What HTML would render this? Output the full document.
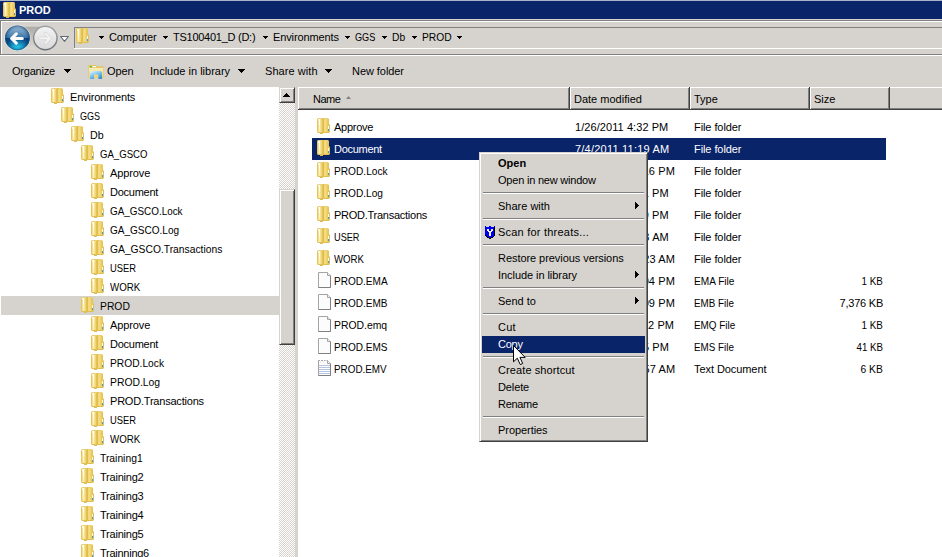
<!DOCTYPE html><html><head><meta charset="utf-8"><style>*{margin:0;padding:0;box-sizing:border-box}
html,body{width:942px;height:557px;overflow:hidden;background:#d6d3ce;font-family:"Liberation Sans",sans-serif;font-size:11px;color:#000;position:relative}
.ic{position:absolute;width:16px;height:16px;overflow:visible}
#title{position:absolute;left:0;top:0;width:942px;height:19px;background:#0a246a;border-top:1px solid #a6b2cc}

.tt{position:absolute;left:19px;top:3px;line-height:13px;color:#fff;font-weight:bold;font-size:11px}
.abs{position:absolute}
.t12{position:absolute;white-space:nowrap;line-height:14px}
#tree{position:absolute;left:0;top:87px;width:279px;height:470px;background:#fff;overflow:hidden}
.trow{position:absolute;left:1px;width:278px;height:19px}
.trow.sel{background:#d6d3ce}
.trow .ic{}
.tl{position:absolute;top:4px;line-height:13px;white-space:nowrap}
#list{position:absolute;left:298px;top:116px;width:644px;height:441px}
#listbg{position:absolute;left:298px;top:110px;width:644px;height:447px;background:#fff}
.lrow{position:absolute;left:0;width:644px;height:22px}
.lrow .selbg{display:none}
.lrow.sel .selbg{display:block;position:absolute;left:14px;top:0;width:574px;height:22px;background:#0a246a}
.lrow.sel span{color:#fff}
.lrow span{position:absolute;top:5px;line-height:13px;white-space:nowrap}
.c1{left:36px}
.c2{left:277px}
.c3{left:396px}
.c4{right:59px;text-align:right}
#menu{position:absolute;left:479px;top:152px;width:169px;height:290px;background:#d6d3ce;border-top:1px solid #d6d3ce;border-left:1px solid #d6d3ce;border-right:1px solid #404040;border-bottom:1px solid #404040;box-shadow:inset 1px 1px 0 #fff,inset -1px -1px 0 #808080}
.mi{position:absolute;left:2px;width:163px;height:17px}
.mt{position:absolute;left:16px;top:2px;line-height:13px;white-space:nowrap}
.mb .mt{font-weight:bold}
.mh{background:#0a246a;color:#fff}
.msep{position:absolute;left:3px;width:161px;height:2px;margin-top:3px;border-top:1px solid #808080;border-bottom:1px solid #fff}
.marr{position:absolute;right:7px;top:4px;width:0;height:0;border-top:4px solid transparent;border-bottom:4px solid transparent;border-left:4px solid #000}
.shield{position:absolute;left:3px;top:2px;width:10px;height:13px}
#cursor{position:absolute;left:513px;top:345px}
.tri5{width:0;height:0;border-left:3px solid transparent;border-right:3px solid transparent;border-top:3px solid #000}
.tri7{width:0;height:0;border-left:4px solid transparent;border-right:4px solid transparent;border-top:4px solid #000}
.btn3d{background:#d6d3ce;border-right:1px solid #404040;border-bottom:1px solid #404040;box-shadow:inset 1px 1px 0 #fff,inset -1px -1px 0 #808080;border-top:1px solid #d6d3ce;border-left:1px solid #d6d3ce}
.hd{position:absolute;top:87px;height:23px;background:#d6d3ce;border-right:1px solid #404040;border-bottom:1px solid #404040;box-shadow:inset 1px 1px 0 #fff,inset -1px -1px 0 #808080}
.hd span{position:absolute;top:6px;line-height:13px;white-space:nowrap}
</style></head><body>
<svg width="0" height="0" style="position:absolute">
<defs>
<linearGradient id="fg1" x1="0" y1="0" x2="1" y2="0"><stop offset="0" stop-color="#e6c85a"/><stop offset="0.35" stop-color="#fbf0b8"/><stop offset="1" stop-color="#e9cf6a"/></linearGradient>
<linearGradient id="fg2" x1="0" y1="0" x2="1" y2="0"><stop offset="0" stop-color="#d9b94a"/><stop offset="0.5" stop-color="#f2df8e"/><stop offset="1" stop-color="#e2c660"/></linearGradient>
<g id="fold" shape-rendering="crispEdges"><rect x="1" y="1" width="1" height="1" fill="#ead07a" opacity="0.45"/><rect x="1" y="2" width="1" height="13" fill="#e6c656"/><rect x="1" y="15" width="1" height="1" fill="#e0c056" opacity="0.45"/><rect x="2" y="1" width="1" height="1" fill="#ead07a"/><rect x="2" y="2" width="1" height="2" fill="#fff6d0"/><rect x="2" y="4" width="1" height="11" fill="#f6e08a"/><rect x="2" y="15" width="1" height="1" fill="#e0c056"/><rect x="3" y="1" width="1" height="1" fill="#ead07a"/><rect x="3" y="2" width="1" height="6" fill="#ffffff"/><rect x="3" y="8" width="1" height="4" fill="#fcf2cc"/><rect x="3" y="12" width="1" height="3" fill="#fbecb0"/><rect x="3" y="15" width="1" height="1" fill="#e0c056"/><rect x="4" y="1" width="1" height="1" fill="#ead07a"/><rect x="4" y="2" width="1" height="13" fill="#f6e296"/><rect x="4" y="15" width="1" height="1" fill="#e0c056"/><rect x="4" y="16" width="1" height="1" fill="#dfbf52"/><rect x="5" y="1" width="1" height="1" fill="#ead07a"/><rect x="5" y="2" width="1" height="13" fill="#f0d678"/><rect x="5" y="15" width="1" height="1" fill="#e0c056"/><rect x="5" y="16" width="1" height="1" fill="#dfbf52"/><rect x="6" y="1" width="1" height="1" fill="#ead07a"/><rect x="6" y="2" width="1" height="13" fill="#e4c256"/><rect x="6" y="15" width="1" height="1" fill="#e0c056"/><rect x="6" y="16" width="1" height="1" fill="#dfbf52"/><rect x="7" y="1" width="1" height="14" fill="#dfbd4c"/><rect x="7" y="15" width="1" height="1" fill="#dfbf52"/><rect x="8" y="1" width="1" height="1" fill="#eed27a"/><rect x="8" y="2" width="1" height="13" fill="#f2d878"/><rect x="8" y="15" width="1" height="1" fill="#dfbf52"/><rect x="9" y="1" width="1" height="1" fill="#eed27a"/><rect x="9" y="2" width="1" height="13" fill="#f4dc82"/><rect x="9" y="15" width="1" height="1" fill="#dfbf52"/><rect x="10" y="1" width="1" height="1" fill="#eed27a"/><rect x="10" y="2" width="1" height="13" fill="#f0d472"/><rect x="10" y="15" width="1" height="1" fill="#dfbf52"/><rect x="11" y="1" width="1" height="1" fill="#eed27a"/><rect x="11" y="2" width="1" height="13" fill="#eacb62"/><rect x="11" y="15" width="1" height="1" fill="#dfbf52"/><rect x="12" y="1" width="1" height="1" fill="#eed27a" opacity="0.45"/><rect x="12" y="2" width="1" height="7" fill="#e4c456"/><rect x="12" y="9" width="1" height="3" fill="#f8fbff"/><rect x="12" y="12" width="1" height="2" fill="#3a9ae4"/><rect x="12" y="14" width="1" height="1" fill="#e4c456"/><rect x="12" y="15" width="1" height="1" fill="#dfbf52"/><rect x="13" y="7" width="1" height="1" fill="#e0bf50" opacity="0.45"/><rect x="13" y="8" width="1" height="7" fill="#e0bf50"/><rect x="13" y="15" width="1" height="1" fill="#e0bf50" opacity="0.45"/></g>
<g id="doc">
 <path d="M2.5 1.5 H11.5 L14.5 4.5 V16.5 H2.5 Z" fill="#fdfcfd" stroke="#a4a4a4"/>
 <path d="M2.5 16.5 H14.5 V4.5" fill="none" stroke="#808080"/>
 <path d="M11.5 1.5 V4.5 H14.5" fill="#f2f2f2" stroke="#a4a4a4"/>
</g>
<g id="txt">
 <path d="M2.5 1.5 H11.5 L14.5 4.5 V16.5 H2.5 Z" fill="#fdfcfd" stroke="#a4a4a4"/>
 <path d="M2.5 16.5 H14.5 V4.5" fill="none" stroke="#808080"/>
 <path d="M11.5 1.5 V4.5 H14.5" fill="#f2f2f2" stroke="#a4a4a4"/>
 <path d="M4 1.5 H5 M7 1.5 H8 M9.5 1.5 H10.5" stroke="#fff" stroke-width="1.2"/>
 <path d="M4.5 3 H5 M7.5 3 H8" stroke="#b8c4d8"/>
 <path d="M3 6.5 H14 M3 8.5 H14 M3 10.5 H14 M3 12.5 H14 M3 14.5 H14" stroke="#b6c6e2"/>
</g>
<g id="shield" shape-rendering="crispEdges"><rect x="0" y="0" width="1" height="1" fill="#0000f0"/><rect x="4" y="0" width="1" height="1" fill="#0000f0"/><rect x="5" y="0" width="1" height="1" fill="#0000f0"/><rect x="9" y="0" width="1" height="1" fill="#0000f0"/><rect x="0" y="1" width="1" height="1" fill="#0000f0"/><rect x="1" y="1" width="1" height="1" fill="#0000f0"/><rect x="2" y="1" width="1" height="1" fill="#0000f0"/><rect x="3" y="1" width="1" height="1" fill="#0000f0"/><rect x="4" y="1" width="1" height="1" fill="#0000f0"/><rect x="5" y="1" width="1" height="1" fill="#0000f0"/><rect x="6" y="1" width="1" height="1" fill="#0000f0"/><rect x="7" y="1" width="1" height="1" fill="#0000f0"/><rect x="8" y="1" width="1" height="1" fill="#0000f0"/><rect x="9" y="1" width="1" height="1" fill="#000000"/><rect x="0" y="2" width="1" height="1" fill="#0000f0"/><rect x="1" y="2" width="1" height="1" fill="#0000f0"/><rect x="2" y="2" width="1" height="1" fill="#0000f0"/><rect x="3" y="2" width="1" height="1" fill="#0000f0"/><rect x="4" y="2" width="1" height="1" fill="#0000f0"/><rect x="5" y="2" width="1" height="1" fill="#0000f0"/><rect x="6" y="2" width="1" height="1" fill="#0000f0"/><rect x="7" y="2" width="1" height="1" fill="#0000f0"/><rect x="8" y="2" width="1" height="1" fill="#0000f0"/><rect x="9" y="2" width="1" height="1" fill="#000000"/><rect x="0" y="3" width="1" height="1" fill="#0000f0"/><rect x="1" y="3" width="1" height="1" fill="#0000f0"/><rect x="2" y="3" width="1" height="1" fill="#f4f4e0"/><rect x="3" y="3" width="1" height="1" fill="#f4f4e0"/><rect x="4" y="3" width="1" height="1" fill="#0000f0"/><rect x="5" y="3" width="1" height="1" fill="#0000f0"/><rect x="6" y="3" width="1" height="1" fill="#f4f4e0"/><rect x="7" y="3" width="1" height="1" fill="#f4f4e0"/><rect x="8" y="3" width="1" height="1" fill="#0000f0"/><rect x="9" y="3" width="1" height="1" fill="#000000"/><rect x="0" y="4" width="1" height="1" fill="#0000f0"/><rect x="1" y="4" width="1" height="1" fill="#0000f0"/><rect x="2" y="4" width="1" height="1" fill="#f4f4e0"/><rect x="3" y="4" width="1" height="1" fill="#f4f4e0"/><rect x="4" y="4" width="1" height="1" fill="#0000f0"/><rect x="5" y="4" width="1" height="1" fill="#0000f0"/><rect x="6" y="4" width="1" height="1" fill="#f4f4e0"/><rect x="7" y="4" width="1" height="1" fill="#f4f4e0"/><rect x="8" y="4" width="1" height="1" fill="#0000f0"/><rect x="9" y="4" width="1" height="1" fill="#000000"/><rect x="0" y="5" width="1" height="1" fill="#0000f0"/><rect x="1" y="5" width="1" height="1" fill="#0000f0"/><rect x="2" y="5" width="1" height="1" fill="#0000f0"/><rect x="3" y="5" width="1" height="1" fill="#f4f4e0"/><rect x="4" y="5" width="1" height="1" fill="#f4f4e0"/><rect x="5" y="5" width="1" height="1" fill="#f4f4e0"/><rect x="6" y="5" width="1" height="1" fill="#f4f4e0"/><rect x="7" y="5" width="1" height="1" fill="#0000f0"/><rect x="8" y="5" width="1" height="1" fill="#0000f0"/><rect x="9" y="5" width="1" height="1" fill="#000000"/><rect x="0" y="6" width="1" height="1" fill="#0000f0"/><rect x="1" y="6" width="1" height="1" fill="#0000f0"/><rect x="2" y="6" width="1" height="1" fill="#0000f0"/><rect x="3" y="6" width="1" height="1" fill="#0000f0"/><rect x="4" y="6" width="1" height="1" fill="#f4f4e0"/><rect x="5" y="6" width="1" height="1" fill="#f4f4e0"/><rect x="6" y="6" width="1" height="1" fill="#0000f0"/><rect x="7" y="6" width="1" height="1" fill="#0000f0"/><rect x="8" y="6" width="1" height="1" fill="#0000f0"/><rect x="9" y="6" width="1" height="1" fill="#000000"/><rect x="0" y="7" width="1" height="1" fill="#0000f0"/><rect x="1" y="7" width="1" height="1" fill="#0000f0"/><rect x="2" y="7" width="1" height="1" fill="#0000f0"/><rect x="3" y="7" width="1" height="1" fill="#0000f0"/><rect x="4" y="7" width="1" height="1" fill="#f4f4e0"/><rect x="5" y="7" width="1" height="1" fill="#f4f4e0"/><rect x="6" y="7" width="1" height="1" fill="#0000f0"/><rect x="7" y="7" width="1" height="1" fill="#0000f0"/><rect x="8" y="7" width="1" height="1" fill="#0000f0"/><rect x="9" y="7" width="1" height="1" fill="#000000"/><rect x="0" y="8" width="1" height="1" fill="#0000f0"/><rect x="1" y="8" width="1" height="1" fill="#0000f0"/><rect x="2" y="8" width="1" height="1" fill="#0000f0"/><rect x="3" y="8" width="1" height="1" fill="#0000f0"/><rect x="4" y="8" width="1" height="1" fill="#f4f4e0"/><rect x="5" y="8" width="1" height="1" fill="#f4f4e0"/><rect x="6" y="8" width="1" height="1" fill="#0000f0"/><rect x="7" y="8" width="1" height="1" fill="#0000f0"/><rect x="8" y="8" width="1" height="1" fill="#0000f0"/><rect x="9" y="8" width="1" height="1" fill="#000000"/><rect x="0" y="9" width="1" height="1" fill="#000000"/><rect x="1" y="9" width="1" height="1" fill="#0000f0"/><rect x="2" y="9" width="1" height="1" fill="#0000f0"/><rect x="3" y="9" width="1" height="1" fill="#0000f0"/><rect x="4" y="9" width="1" height="1" fill="#f4f4e0"/><rect x="5" y="9" width="1" height="1" fill="#f4f4e0"/><rect x="6" y="9" width="1" height="1" fill="#0000f0"/><rect x="7" y="9" width="1" height="1" fill="#0000f0"/><rect x="8" y="9" width="1" height="1" fill="#0000f0"/><rect x="9" y="9" width="1" height="1" fill="#000000"/><rect x="1" y="10" width="1" height="1" fill="#000000"/><rect x="2" y="10" width="1" height="1" fill="#0000f0"/><rect x="3" y="10" width="1" height="1" fill="#0000f0"/><rect x="4" y="10" width="1" height="1" fill="#0000f0"/><rect x="5" y="10" width="1" height="1" fill="#0000f0"/><rect x="6" y="10" width="1" height="1" fill="#0000f0"/><rect x="7" y="10" width="1" height="1" fill="#0000f0"/><rect x="8" y="10" width="1" height="1" fill="#000000"/><rect x="2" y="11" width="1" height="1" fill="#000000"/><rect x="3" y="11" width="1" height="1" fill="#000000"/><rect x="4" y="11" width="1" height="1" fill="#0000f0"/><rect x="5" y="11" width="1" height="1" fill="#0000f0"/><rect x="6" y="11" width="1" height="1" fill="#000000"/><rect x="7" y="11" width="1" height="1" fill="#000000"/><rect x="4" y="12" width="1" height="1" fill="#000000"/><rect x="5" y="12" width="1" height="1" fill="#000000"/></g>
<g id="cur"><path d="M0.5 0.5 V16.8 L4.3 13.2 L7.3 19.6 L9.7 18.5 L6.9 12.4 H12.2 Z" fill="#fff" stroke="#000" stroke-linejoin="miter"/></g>
</defs>
</svg>

<div id="title"><svg class="ic" style="left:2px;top:0px"><use href="#fold"/></svg><span class="tt">PROD</span></div>
<div class="abs" style="left:0;top:20px;width:942px;height:1px;background:#808080"></div>
<div class="abs" style="left:0;top:21px;width:942px;height:1px;background:#fff"></div>
<div class="abs" style="left:0;top:20px;width:1px;height:35px;background:#808080"></div>
<div class="abs" style="left:1px;top:21px;width:1px;height:34px;background:#fff"></div>
<div class="abs" style="left:0;top:54px;width:942px;height:1px;background:#808080"></div>
<div class="abs" style="left:0;top:55px;width:942px;height:1px;background:#fff"></div>
<svg class="abs" style="left:0;top:22px" width="72" height="32">
 <defs>
  <linearGradient id="bb" x1="0" y1="0" x2="0" y2="1"><stop offset="0" stop-color="#cfe0ec"/><stop offset="0.1" stop-color="#8db2d2"/><stop offset="0.49" stop-color="#3a76a8"/><stop offset="0.51" stop-color="#08427e"/><stop offset="0.78" stop-color="#0a5c9e"/><stop offset="1" stop-color="#16b4e4"/></linearGradient><radialGradient id="bedge" cx="0.5" cy="0.5" r="0.5"><stop offset="0.7" stop-color="#062850" stop-opacity="0"/><stop offset="1" stop-color="#062850" stop-opacity="0.45"/></radialGradient>
  <radialGradient id="bglow" cx="0.5" cy="1" r="0.5"><stop offset="0" stop-color="#30e8ff" stop-opacity="0.9"/><stop offset="1" stop-color="#30e8ff" stop-opacity="0"/></radialGradient>
  <linearGradient id="fb" x1="0" y1="0" x2="0" y2="1"><stop offset="0" stop-color="#f4f4f4"/><stop offset="0.5" stop-color="#e6e6e6"/><stop offset="1" stop-color="#dadada"/></linearGradient>
  <linearGradient id="pill" x1="0" y1="0" x2="0" y2="1"><stop offset="0" stop-color="#aeaca6"/><stop offset="0.6" stop-color="#cac7c0"/><stop offset="1" stop-color="#dcd9d2"/></linearGradient>
  <linearGradient id="ring" x1="0" y1="0" x2="0" y2="1"><stop offset="0" stop-color="#9ea3a8"/><stop offset="1" stop-color="#6a7078"/></linearGradient>
 </defs>
 <path d="M17 4.8 H45 A11.2 11.2 0 0 1 45 27.2 H17 A11.2 11.2 0 0 1 17 4.8 Z" fill="url(#pill)"/>
 <circle cx="17.4" cy="15.8" r="13.2" fill="#e8e8e4" opacity="0.7"/>
 <circle cx="17.4" cy="15.8" r="12.4" fill="url(#bb)"/>
 <circle cx="17.4" cy="15.8" r="12.4" fill="url(#bglow)"/><circle cx="17.4" cy="15.8" r="12.4" fill="url(#bedge)"/>
 <circle cx="17.4" cy="15.8" r="12.0" fill="none" stroke="#1a5a98" stroke-width="0.8" opacity="0.6"/>
 <path d="M16.3 11.8 L11.6 16.5 L16.3 21.2 M12.2 16.5 H22.3" fill="none" stroke="#fafafa" stroke-width="3.1" stroke-linecap="round" stroke-linejoin="round"/>
 <circle cx="45.35" cy="16" r="11.7" fill="url(#fb)" stroke="url(#ring)" stroke-width="1.4"/>
 <path d="M45.5 11.6 L50.2 16.3 L45.5 21 M39.8 16.3 H49.5" fill="none" stroke="#cfcfcf" stroke-width="3.3" stroke-linecap="round" stroke-linejoin="round"/>
 <path d="M45.5 11.6 L50.2 16.3 L45.5 21 M39.8 16.3 H49.5" fill="none" stroke="#f2f2f2" stroke-width="2.2" stroke-linecap="round" stroke-linejoin="round"/>
 <path d="M60.6 14.5 H68.4 L64.5 19.3 Z" fill="#fff" stroke="#5f6a74" stroke-width="1.1" stroke-linejoin="round"/>
</svg>
<div class="abs" style="left:74px;top:27px;width:868px;height:1px;background:#808080"></div>
<div class="abs" style="left:74px;top:27px;width:1px;height:21px;background:#808080"></div>
<div class="abs" style="left:74px;top:48px;width:868px;height:1px;background:#fff"></div>
<svg class="ic" style="left:75px;top:27px"><use href="#fold"/></svg>

<svg class="abs" style="left:99px;top:36px" width="5" height="3" shape-rendering="crispEdges"><path d="M0 0H5V1H4V2H3V3H2V2H1V1H0Z"/></svg>
<svg class="abs" style="left:163px;top:36px" width="5" height="3" shape-rendering="crispEdges"><path d="M0 0H5V1H4V2H3V3H2V2H1V1H0Z"/></svg>
<svg class="abs" style="left:263px;top:36px" width="5" height="3" shape-rendering="crispEdges"><path d="M0 0H5V1H4V2H3V3H2V2H1V1H0Z"/></svg>
<svg class="abs" style="left:345px;top:36px" width="5" height="3" shape-rendering="crispEdges"><path d="M0 0H5V1H4V2H3V3H2V2H1V1H0Z"/></svg>
<svg class="abs" style="left:382px;top:36px" width="5" height="3" shape-rendering="crispEdges"><path d="M0 0H5V1H4V2H3V3H2V2H1V1H0Z"/></svg>
<svg class="abs" style="left:412px;top:36px" width="5" height="3" shape-rendering="crispEdges"><path d="M0 0H5V1H4V2H3V3H2V2H1V1H0Z"/></svg>
<svg class="abs" style="left:457px;top:36px" width="5" height="3" shape-rendering="crispEdges"><path d="M0 0H5V1H4V2H3V3H2V2H1V1H0Z"/></svg>
<span class="t12" style="left:109px;top:30px;letter-spacing:-0.10px;">Computer</span>
<span class="t12" style="left:173px;top:30px;letter-spacing:-0.26px;">TS100401_D (D:)</span>
<span class="t12" style="left:273px;top:30px;letter-spacing:-0.12px;">Environments</span>
<span class="t12" style="left:355px;top:30px;transform:scaleX(0.829);transform-origin:left center;">GGS</span>
<span class="t12" style="left:392px;top:30px;transform:scaleX(0.931);transform-origin:left center;">Db</span>
<span class="t12" style="left:422px;top:30px;transform:scaleX(0.933);transform-origin:left center;">PROD</span>
<svg class="abs" style="left:87px;top:63px" width="18" height="18">
 <defs>
  <linearGradient id="ob" x1="0" y1="0" x2="0.6" y2="1"><stop offset="0" stop-color="#e8f6ff"/><stop offset="0.45" stop-color="#8ccdf2"/><stop offset="1" stop-color="#2e94dc"/></linearGradient>
  <linearGradient id="of" x1="0" y1="0" x2="0" y2="1"><stop offset="0" stop-color="#fbefb8"/><stop offset="1" stop-color="#ead27a"/></linearGradient>
 </defs>
 <path d="M1.5 2.5 Q1.5 2 2 2 H9 L10 3.2 H16 Q16.7 3.2 16.7 4 V14.5 Q16.7 15 16 15 H2 Q1.5 15 1.5 14.5 Z" fill="#e4c662"/>
 <rect x="3" y="3" width="2.2" height="1.2" fill="#3cc83c"/>
 <rect x="5.2" y="3" width="4" height="1.2" fill="#f8f8f0"/>
 <path d="M2 5 H16.2 V14.6 H2 Z" fill="url(#of)"/>
 <path d="M3 16 V9.6 Q3 8 4.6 8 H13.4 Q15 8 15 9.6 V16 H11.4 V11.4 H7 V16 Z" fill="url(#ob)"/>
</svg>

<svg class="abs" style="left:64px;top:69px" width="7" height="4" shape-rendering="crispEdges"><path d="M0 0H7V1H6V2H5V3H4V4H3V3H2V2H1V1H0Z"/></svg>
<svg class="abs" style="left:238px;top:69px" width="7" height="4" shape-rendering="crispEdges"><path d="M0 0H7V1H6V2H5V3H4V4H3V3H2V2H1V1H0Z"/></svg>
<svg class="abs" style="left:325px;top:69px" width="7" height="4" shape-rendering="crispEdges"><path d="M0 0H7V1H6V2H5V3H4V4H3V3H2V2H1V1H0Z"/></svg>
<span class="t12" style="left:12px;top:64px;letter-spacing:-0.21px;">Organize</span>
<span class="t12" style="left:107px;top:64px;letter-spacing:-0.10px;">Open</span>
<span class="t12" style="left:150px;top:64px;">Include in library</span>
<span class="t12" style="left:265px;top:64px;letter-spacing:0.07px;">Share with</span>
<span class="t12" style="left:352px;top:64px;letter-spacing:-0.06px;">New folder</span>
<div id="tree">
<div class="trow" style="top:0px"><svg class="ic" style="left:49px;top:0px"><use href="#fold"/></svg><span class="tl" style="left:69px;letter-spacing:-0.18px;">Environments</span></div>
<div class="trow" style="top:19px"><svg class="ic" style="left:59px;top:0px"><use href="#fold"/></svg><span class="tl" style="left:79px;transform:scaleX(0.821);transform-origin:left center;">GGS</span></div>
<div class="trow" style="top:38px"><svg class="ic" style="left:69px;top:0px"><use href="#fold"/></svg><span class="tl" style="left:89px;transform:scaleX(0.969);transform-origin:left center;">Db</span></div>
<div class="trow" style="top:57px"><svg class="ic" style="left:79px;top:0px"><use href="#fold"/></svg><span class="tl" style="left:99px;transform:scaleX(0.872);transform-origin:left center;">GA_GSCO</span></div>
<div class="trow" style="top:76px"><svg class="ic" style="left:89px;top:0px"><use href="#fold"/></svg><span class="tl" style="left:109px;letter-spacing:-0.12px;">Approve</span></div>
<div class="trow" style="top:95px"><svg class="ic" style="left:89px;top:0px"><use href="#fold"/></svg><span class="tl" style="left:109px;letter-spacing:-0.26px;">Document</span></div>
<div class="trow" style="top:114px"><svg class="ic" style="left:89px;top:0px"><use href="#fold"/></svg><span class="tl" style="left:109px;transform:scaleX(0.899);transform-origin:left center;">GA_GSCO.Lock</span></div>
<div class="trow" style="top:133px"><svg class="ic" style="left:89px;top:0px"><use href="#fold"/></svg><span class="tl" style="left:109px;transform:scaleX(0.911);transform-origin:left center;">GA_GSCO.Log</span></div>
<div class="trow" style="top:152px"><svg class="ic" style="left:89px;top:0px"><use href="#fold"/></svg><span class="tl" style="left:109px;transform:scaleX(0.936);transform-origin:left center;">GA_GSCO.Transactions</span></div>
<div class="trow" style="top:171px"><svg class="ic" style="left:89px;top:0px"><use href="#fold"/></svg><span class="tl" style="left:109px;transform:scaleX(0.852);transform-origin:left center;">USER</span></div>
<div class="trow" style="top:190px"><svg class="ic" style="left:89px;top:0px"><use href="#fold"/></svg><span class="tl" style="left:109px;transform:scaleX(0.885);transform-origin:left center;">WORK</span></div>
<div class="trow sel" style="top:209px"><svg class="ic" style="left:79px;top:0px"><use href="#fold"/></svg><span class="tl" style="left:99px;transform:scaleX(0.940);transform-origin:left center;">PROD</span></div>
<div class="trow" style="top:228px"><svg class="ic" style="left:89px;top:0px"><use href="#fold"/></svg><span class="tl" style="left:109px;letter-spacing:-0.12px;">Approve</span></div>
<div class="trow" style="top:247px"><svg class="ic" style="left:89px;top:0px"><use href="#fold"/></svg><span class="tl" style="left:109px;letter-spacing:-0.26px;">Document</span></div>
<div class="trow" style="top:266px"><svg class="ic" style="left:89px;top:0px"><use href="#fold"/></svg><span class="tl" style="left:109px;transform:scaleX(0.930);transform-origin:left center;">PROD.Lock</span></div>
<div class="trow" style="top:285px"><svg class="ic" style="left:89px;top:0px"><use href="#fold"/></svg><span class="tl" style="left:109px;transform:scaleX(0.942);transform-origin:left center;">PROD.Log</span></div>
<div class="trow" style="top:304px"><svg class="ic" style="left:89px;top:0px"><use href="#fold"/></svg><span class="tl" style="left:109px;letter-spacing:-0.21px;">PROD.Transactions</span></div>
<div class="trow" style="top:323px"><svg class="ic" style="left:89px;top:0px"><use href="#fold"/></svg><span class="tl" style="left:109px;transform:scaleX(0.852);transform-origin:left center;">USER</span></div>
<div class="trow" style="top:342px"><svg class="ic" style="left:89px;top:0px"><use href="#fold"/></svg><span class="tl" style="left:109px;transform:scaleX(0.885);transform-origin:left center;">WORK</span></div>
<div class="trow" style="top:361px"><svg class="ic" style="left:79px;top:0px"><use href="#fold"/></svg><span class="tl" style="left:99px;transform:scaleX(0.938);transform-origin:left center;">Training1</span></div>
<div class="trow" style="top:380px"><svg class="ic" style="left:79px;top:0px"><use href="#fold"/></svg><span class="tl" style="left:99px;letter-spacing:-0.22px;">Training2</span></div>
<div class="trow" style="top:399px"><svg class="ic" style="left:79px;top:0px"><use href="#fold"/></svg><span class="tl" style="left:99px;letter-spacing:-0.22px;">Training3</span></div>
<div class="trow" style="top:418px"><svg class="ic" style="left:79px;top:0px"><use href="#fold"/></svg><span class="tl" style="left:99px;letter-spacing:-0.22px;">Training4</span></div>
<div class="trow" style="top:437px"><svg class="ic" style="left:79px;top:0px"><use href="#fold"/></svg><span class="tl" style="left:99px;letter-spacing:-0.22px;">Training5</span></div>
<div class="trow" style="top:456px"><svg class="ic" style="left:79px;top:0px"><use href="#fold"/></svg><span class="tl" style="left:99px;letter-spacing:-0.26px;">Trainning6</span></div>
</div>
<div class="abs" style="left:279px;top:87px;width:16px;height:470px;background-color:#fff;background-image:linear-gradient(45deg,#d6d3ce 25%,transparent 25%,transparent 75%,#d6d3ce 75%),linear-gradient(45deg,#d6d3ce 25%,transparent 25%,transparent 75%,#d6d3ce 75%);background-size:2px 2px;background-position:0 0,1px 1px"></div>
<div class="abs btn3d" style="left:279px;top:87px;width:16px;height:16px"><svg class="abs" style="left:3px;top:5px" width="7" height="4" shape-rendering="crispEdges"><path d="M3 0H4V1H5V2H6V3H7V4H0V3H1V2H2V1H3Z"/></svg></div>
<div class="abs btn3d" style="left:279px;top:189px;width:16px;height:156px"></div>

<div id="listbg"></div>
<div class="hd" style="left:298px;width:272px"><span style="left:15px;letter-spacing:-0.5px">Name</span><svg class="abs" style="left:48px;top:9px" width="6" height="4"><path d="M0 3 L2.5 0 L5 3 Z" fill="#858585"/></svg></div>
<div class="hd" style="left:570px;width:120px"><span style="left:4px">Date modified</span></div>
<div class="hd" style="left:690px;width:120px"><span style="left:4px">Type</span></div>
<div class="hd" style="left:810px;width:80px"><span style="left:4px">Size</span></div>
<div class="hd" style="left:890px;width:60px;box-shadow:inset 0 1px 0 #fff,inset 0 -1px 0 #808080"></div>

<div id="list">
<div class="lrow" style="top:0px"><div class="selbg"></div><svg class="ic" style="left:18px;top:1px"><use href="#fold"/></svg><span class="c1" style="letter-spacing:-0.25px;">Approve</span><span class="c2" style="letter-spacing:0.07px;">1/26/2011 4:32 PM</span><span class="c3" style="letter-spacing:-0.08px;">File folder</span><span class="c4" style=""></span></div>
<div class="lrow sel" style="top:22px"><div class="selbg"></div><svg class="ic" style="left:18px;top:1px"><use href="#fold"/></svg><span class="c1" style="letter-spacing:-0.29px;">Document</span><span class="c2" style="letter-spacing:0.22px;">7/4/2011 11:19 AM</span><span class="c3" style="letter-spacing:-0.08px;">File folder</span><span class="c4" style=""></span></div>
<div class="lrow" style="top:44px"><div class="selbg"></div><svg class="ic" style="left:18px;top:1px"><use href="#fold"/></svg><span class="c1" style="transform:scaleX(0.923);transform-origin:left center;">PROD.Lock</span><span class="c2" style="letter-spacing:0.09px;">7/14/2011 12:16 PM</span><span class="c3" style="letter-spacing:-0.08px;">File folder</span><span class="c4" style=""></span></div>
<div class="lrow" style="top:66px"><div class="selbg"></div><svg class="ic" style="left:18px;top:1px"><use href="#fold"/></svg><span class="c1" style="transform:scaleX(0.921);transform-origin:left center;">PROD.Log</span><span class="c2" style="letter-spacing:0.09px;">7/4/2011 12:01 PM</span><span class="c3" style="letter-spacing:-0.08px;">File folder</span><span class="c4" style=""></span></div>
<div class="lrow" style="top:88px"><div class="selbg"></div><svg class="ic" style="left:18px;top:1px"><use href="#fold"/></svg><span class="c1" style="letter-spacing:-0.26px;">PROD.Transactions</span><span class="c2" style="letter-spacing:0.09px;">7/4/2011 12:09 PM</span><span class="c3" style="letter-spacing:-0.08px;">File folder</span><span class="c4" style=""></span></div>
<div class="lrow" style="top:110px"><div class="selbg"></div><svg class="ic" style="left:18px;top:1px"><use href="#fold"/></svg><span class="c1" style="transform:scaleX(0.834);transform-origin:left center;">USER</span><span class="c2" style="letter-spacing:0.14px;">1/26/2011 4:33 AM</span><span class="c3" style="letter-spacing:-0.08px;">File folder</span><span class="c4" style=""></span></div>
<div class="lrow" style="top:132px"><div class="selbg"></div><svg class="ic" style="left:18px;top:1px"><use href="#fold"/></svg><span class="c1" style="transform:scaleX(0.876);transform-origin:left center;">WORK</span><span class="c2" style="letter-spacing:0.13px;">1/26/2011 10:23 AM</span><span class="c3" style="letter-spacing:-0.08px;">File folder</span><span class="c4" style=""></span></div>
<div class="lrow" style="top:154px"><div class="selbg"></div><svg class="ic" style="left:18px;top:1px"><use href="#doc"/></svg><span class="c1" style="transform:scaleX(0.914);transform-origin:left center;">PROD.EMA</span><span class="c2" style="letter-spacing:0.09px;">7/14/2011 12:04 PM</span><span class="c3" style="transform:scaleX(0.919);transform-origin:left center;">EMA File</span><span class="c4" style="transform:scaleX(0.895);transform-origin:right center;">1 KB</span></div>
<div class="lrow" style="top:176px"><div class="selbg"></div><svg class="ic" style="left:18px;top:1px"><use href="#doc"/></svg><span class="c1" style="transform:scaleX(0.912);transform-origin:left center;">PROD.EMB</span><span class="c2" style="letter-spacing:0.09px;">7/14/2011 12:09 PM</span><span class="c3" style="transform:scaleX(0.893);transform-origin:left center;">EMB File</span><span class="c4" style="letter-spacing:-0.23px;">7,376 KB</span></div>
<div class="lrow" style="top:198px"><div class="selbg"></div><svg class="ic" style="left:18px;top:1px"><use href="#doc"/></svg><span class="c1" style="transform:scaleX(0.945);transform-origin:left center;">PROD.emq</span><span class="c2" style="letter-spacing:0.09px;">7/14/2011 11:42 PM</span><span class="c3" style="transform:scaleX(0.900);transform-origin:left center;">EMQ File</span><span class="c4" style="transform:scaleX(0.895);transform-origin:right center;">1 KB</span></div>
<div class="lrow" style="top:220px"><div class="selbg"></div><svg class="ic" style="left:18px;top:1px"><use href="#doc"/></svg><span class="c1" style="transform:scaleX(0.912);transform-origin:left center;">PROD.EMS</span><span class="c2" style="letter-spacing:0.11px;">7/4/2011 12:05 PM</span><span class="c3" style="transform:scaleX(0.893);transform-origin:left center;">EMS File</span><span class="c4" style="transform:scaleX(0.883);transform-origin:right center;">41 KB</span></div>
<div class="lrow" style="top:242px"><div class="selbg"></div><svg class="ic" style="left:18px;top:1px"><use href="#txt"/></svg><span class="c1" style="transform:scaleX(0.897);transform-origin:left center;">PROD.EMV</span><span class="c2" style="letter-spacing:0.15px;">1/26/2011 10:57 AM</span><span class="c3" style="letter-spacing:-0.07px;">Text Document</span><span class="c4" style="transform:scaleX(0.936);transform-origin:right center;">6 KB</span></div>
</div>
<div id="menu">
<div class="mi mb" style="top:2px"><span class="mt" style="">Open</span></div>
<div class="mi" style="top:19px"><span class="mt" style="letter-spacing:-0.21px;">Open in new window</span></div>
<div class="msep" style="top:36px"></div>
<div class="mi" style="top:45px"><span class="mt" style="">Share with</span><svg class="abs" style="left:153px;top:4px" width="4" height="7" shape-rendering="crispEdges"><path d="M0 0H1V1H2V2H3V3H4V4H3V5H2V6H1V7H0Z"/></svg></div>
<div class="msep" style="top:62px"></div>
<div class="mi" style="top:71px"><span class="mt" style="letter-spacing:0.22px;">Scan for threats...</span><svg class="shield"><use href="#shield"/></svg></div>
<div class="msep" style="top:88px"></div>
<div class="mi" style="top:97px"><span class="mt" style="letter-spacing:-0.06px;">Restore previous versions</span></div>
<div class="mi" style="top:114px"><span class="mt" style="letter-spacing:-0.06px;">Include in library</span><svg class="abs" style="left:153px;top:4px" width="4" height="7" shape-rendering="crispEdges"><path d="M0 0H1V1H2V2H3V3H4V4H3V5H2V6H1V7H0Z"/></svg></div>
<div class="msep" style="top:131px"></div>
<div class="mi" style="top:140px"><span class="mt" style="">Send to</span><svg class="abs" style="left:153px;top:4px" width="4" height="7" shape-rendering="crispEdges"><path d="M0 0H1V1H2V2H3V3H4V4H3V5H2V6H1V7H0Z"/></svg></div>
<div class="msep" style="top:157px"></div>
<div class="mi" style="top:166px"><span class="mt" style="letter-spacing:0.20px;">Cut</span></div>
<div class="mi mh" style="top:183px"><span class="mt" style="letter-spacing:-0.23px;">Copy</span></div>
<div class="msep" style="top:200px"></div>
<div class="mi" style="top:209px"><span class="mt" style="letter-spacing:0.10px;">Create shortcut</span></div>
<div class="mi" style="top:226px"><span class="mt" style="letter-spacing:-0.12px;">Delete</span></div>
<div class="mi" style="top:243px"><span class="mt" style="letter-spacing:-0.30px;">Rename</span></div>
<div class="msep" style="top:260px"></div>
<div class="mi" style="top:269px"><span class="mt" style="letter-spacing:-0.06px;">Properties</span></div>
</div>
<svg id="cursor" width="14" height="22" viewBox="0 0 14 22"><use href="#cur"/></svg>
</body></html>
